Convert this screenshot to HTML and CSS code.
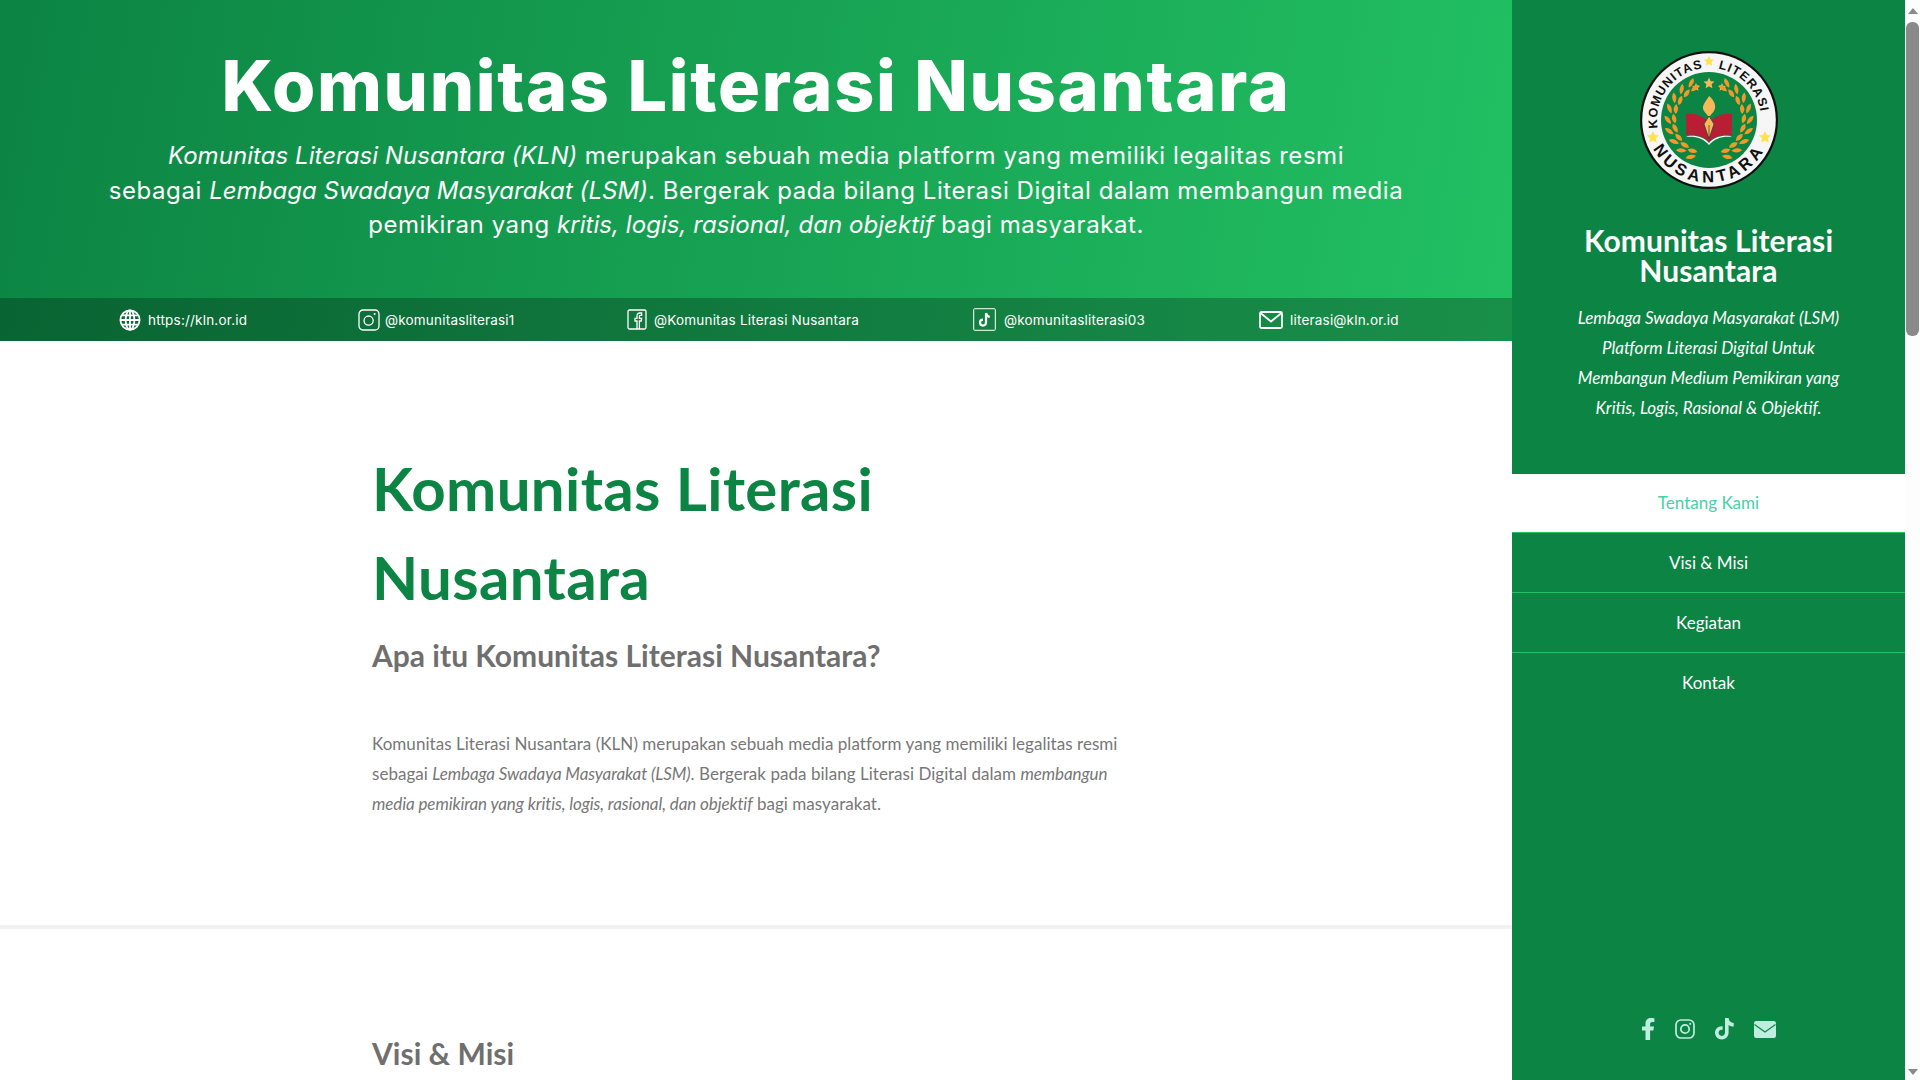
FILE: index.html
```html
<!DOCTYPE html>
<html lang="en">
<head>
    <meta charset="UTF-8">
    <meta name="viewport" content="width=device-width, initial-scale=1.0">
    <title>Komunitas Literasi Nusantara</title>
    <link rel="stylesheet" href="styles.css">
</head>
<body>
    <div class="page">
        <div class="main">
            <header class="hero">
                <div class="hero-text">
                    <h1 class="hero-title">Komunitas Literasi Nusantara</h1>
                    <p class="hero-lead"><em>Komunitas Literasi Nusantara (KLN)</em> merupakan sebuah media platform yang memiliki legalitas resmi<br>sebagai <em>Lembaga Swadaya Masyarakat (LSM)</em>. Bergerak pada bilang Literasi Digital dalam membangun media<br>pemikiran yang <em>kritis, logis, rasional, dan objektif</em> bagi masyarakat.</p>
                </div>
                <div class="hero-links">
                    <span class="hero-link">
                        <svg class="link-icon" width="22" height="22" viewBox="0 0 22 22" fill="none" stroke="#fff" stroke-width="1.8"><circle cx="11" cy="11" r="9.6"/><ellipse cx="11" cy="11" rx="4.4" ry="9.6"/><path d="M11 1.4v19.2M1.4 11h19.2M2.8 6.4h16.4M2.8 15.6h16.4"/></svg>
                        https://kln.or.id
                    </span>
                    <span class="hero-link link-ig">
                        <svg class="link-icon" width="22" height="22" viewBox="0 0 22 22" fill="none" stroke="#fff" stroke-width="1.3"><rect x="1" y="1" width="20" height="20" rx="4"/><circle cx="10.6" cy="11.6" r="4.6"/><circle cx="16.6" cy="5" r="1" fill="#fff" stroke="none"/></svg>
                        @komunitasliterasi1
                    </span>
                    <span class="hero-link">
                        <svg class="link-icon" width="20" height="21" viewBox="0 0 20 21" fill="none" stroke="#fff" stroke-width="1.3"><rect x="1" y="1" width="18" height="19" rx="1.5"/><path d="M10 20v-8H8v-2.6h2V7.2C10 5 11.2 4 13 4h1.6v2.4h-1.2c-.8 0-1 .4-1 1.1v1.9h2.2l-.4 2.6h-1.800v8"/></svg>
                        @Komunitas Literasi Nusantara
                    </span>
                    <span class="hero-link link-tt">
                        <svg class="link-icon" width="23" height="23" viewBox="0 0 23 23" fill="none" stroke="#fff"><rect x=".7" y=".7" width="21.6" height="21.6" rx="1" stroke-width="1"/><path d="M13 5v9.6a3 3 0 1 1-3-3M13 5c.3 2.2 1.6 3.6 3.8 3.9" stroke-width="2.2"/></svg>
                        @komunitasliterasi03
                    </span>
                    <span class="hero-link">
                        <svg class="link-icon" width="24" height="18" viewBox="0 0 24 18" fill="none" stroke="#fff" stroke-width="1.8"><rect x="1" y="1" width="22" height="16" rx="1.5"/><path d="M1.5 2l10.5 8.5L22.500 2"/></svg>
                        literasi@kln.or.id
                    </span>
                </div>
            </header>

            <section class="about">
                <div class="about-inner">
                    <h1 class="about-title">Komunitas Literasi Nusantara</h1>
                    <h2 class="about-sub">Apa itu Komunitas Literasi Nusantara?</h2>
                    <p class="about-text">Komunitas Literasi Nusantara (KLN) merupakan sebuah media platform yang memiliki legalitas resmi sebagai <em>Lembaga Swadaya Masyarakat (LSM)</em>. Bergerak pada bilang Literasi Digital dalam <em>membangun media pemikiran yang kritis, logis, rasional, dan objektif</em> bagi masyarakat.</p>
                </div>
            </section>

            <section class="visi">
                <h2 class="about-sub">Visi &amp; Misi</h2>
            </section>
        </div>

        <aside class="sidebar">
            <div class="brand">
                <svg class="logo" width="140" height="140" viewBox="0 0 140 140">
                    <defs>
                        <path id="arcTop" d="M70 122A52 52 0 1 1 70.100 122"/>
                        <path id="arcBottom" d="M9.500 87A63 63 0 0 0 130.500 87"/>
                        <path id="star" d="M0-5l1.500 3.300 3.500.4-2.600 2.400.7 3.600L0 2.900-3.100 4.700l.7-3.600L-5-1.300l3.500-.4z"/>
                        <g id="leaves" fill="#f19a29">
                            <path d="M0-38q2-6 9-6-1 6-9 6z"/>
                            <path d="M0-38q5-5 10-1-5 5-10 1z" transform="translate(0 4)"/>
                        </g>
                        <g id="laurel">
                            <use href="#leaves" transform="rotate(-32)"/>
                            <use href="#leaves" transform="rotate(-48)"/>
                            <use href="#leaves" transform="rotate(-64)"/>
                            <use href="#leaves" transform="rotate(-80)"/>
                            <use href="#leaves" transform="rotate(-96)"/>
                            <use href="#leaves" transform="rotate(-112)"/>
                            <use href="#leaves" transform="rotate(-128)"/>
                            <use href="#leaves" transform="rotate(-144)"/>
                            <use href="#leaves" transform="rotate(-160)"/>
                        </g>
                    </defs>
                    <circle cx="70" cy="70" r="69" fill="#111"/>
                    <circle cx="70" cy="70" r="66.800" fill="#f6f6f6"/>
                    <circle cx="70" cy="70" r="48" fill="#0c8443"/>
                    <text class="logo-top"><textPath href="#arcTop" startOffset="157" text-anchor="end">KOMUNITAS</textPath></text>
                    <text class="logo-top"><textPath href="#arcTop" startOffset="172" text-anchor="start">LITERASI</textPath></text>
                    <text class="logo-bottom"><textPath href="#arcBottom" startOffset="50%" text-anchor="middle">NUSANTARA</textPath></text>
                    <use href="#star" transform="translate(70 11)" fill="#ffe14d"/>
                    <use href="#star" transform="translate(14 87) scale(1.200)" fill="#ffe14d"/>
                    <use href="#star" transform="translate(126 87) scale(1.200)" fill="#ffe14d"/>
                    <use href="#star" transform="translate(70 33) scale(1.100)" fill="#f5b95a"/>
                    <use href="#star" transform="translate(57 37) scale(.8)" fill="#f5b95a"/>
                    <use href="#star" transform="translate(83 37) scale(.8)" fill="#f5b95a"/>
                    <use href="#laurel" transform="translate(70 70)"/>
                    <use href="#laurel" transform="translate(70 70) scale(-1 1)"/>
                    <path d="M47 64c9-1 17 2 23 8v20c-6-6-14-8-23-7zM93 64c-9-1-17 2-23 8v20c6-6 14-8 23-7z" fill="#b81f35"/>
                    <path d="M49 86c8-1 16 1 21 7 5-6 13-8 21-7l2 1c-9-1-17 1-23 8-6-7-14-9-23-8z" fill="#fff"/>
                    <path d="M70 46c5 4 8 10 5 15-1 2-3 3-4 5h-2c-1-2-3-3-4-5-3-5 1-8 5-15z" fill="#f5b95a"/>
                    <path d="M70 66l5 8-5 15-5-15z" fill="#f5b95a" stroke="#333" stroke-width=".7"/>
                    <path d="M70 75v13" stroke="#333" stroke-width=".7"/>
                </svg>
                <h2 class="brand-title">Komunitas Literasi Nusantara</h2>
                <p class="brand-text">Lembaga Swadaya Masyarakat (LSM) Platform Literasi Digital Untuk Membangun Medium Pemikiran yang Kritis, Logis, Rasional &amp; Objektif.</p>
            </div>
            <nav class="side-nav">
                <a class="nav-item nav-active">Tentang Kami</a>
                <a class="nav-item">Visi &amp; Misi</a>
                <a class="nav-item">Kegiatan</a>
                <a class="nav-item">Kontak</a>
            </nav>
            <div class="side-social">
                <svg width="13" height="22" viewBox="0 0 13 22" fill="#bdeee0"><path d="M3.500 22V12.500H0V8.500h3.500V5.600C3.500 2 5.700 0 9 0c1.500 0 2.900.2 3.400.3v3.600h-2.100c-1.700 0-2.200 1-2.200 2.100v2.500h3.900l-.6 4h-3.300V22z"/></svg>
                <svg width="20" height="20" viewBox="0 0 20 20" fill="none" stroke="#bdeee0" stroke-width="1.700"><rect x="1" y="1" width="18" height="18" rx="5"/><circle cx="10" cy="10" r="4.200"/><circle cx="15.200" cy="4.800" r="1.100" fill="#bdeee0" stroke="none"/></svg>
                <svg width="19" height="22" viewBox="0 0 19 22" fill="#bdeee0"><path d="M10 0h3.600c.2 2.900 2 4.800 5.100 5.100v3.400c-1.900 0-3.600-.6-5.100-1.600v7.600c0 4-3 7-6.800 7S0 18.500 0 14.800c0-4 3.400-7 7.600-6.500v3.600c-2-.5-4 .8-4 2.900 0 1.800 1.400 3.100 3.100 3.100 1.900 0 3.300-1.400 3.300-3.400z"/></svg>
                <svg width="22" height="17" viewBox="0 0 22 17"><rect width="22" height="17" rx="2.200" fill="#bdeee0"/><path d="M.5 3.500L11 11 21.500 3.500" fill="none" stroke="#0c8443" stroke-width="1.100"/></svg>
            </div>
        </aside>

        <div class="scrollbar">
            <span class="scroll-up"></span>
            <div class="scroll-track"><div class="scroll-thumb"></div></div>
            <span class="scroll-down"></span>
        </div>
    </div>
</body>
</html>
```

FILE: styles.css
```css
* {
    box-sizing: border-box;
}
html, body {
    margin: 0;
    padding: 0;
    height: 100%;
    overflow: hidden;
}
body {
    font-family: Lato, "Liberation Sans", sans-serif;
    color: #777;
    background-color: #fff;
}
.page {
    display: flex;
    height: 1080px;
}
.main {
    flex: 1;
    min-width: 0;
    overflow: hidden;
}

/* hero */
.hero {
    height: 341px;
    display: flex;
    flex-direction: column;
    background: linear-gradient(100deg, #0c8443 0%, #22c063 100%);
    color: #fff;
}
.hero-text {
    height: 298px;
    padding-top: 45px;
    text-align: center;
}
.hero-title {
    margin: 0;
    font-family: Inter, "Noto Sans", sans-serif;
    font-size: 70px;
    font-weight: 800;
    line-height: 82px;
    letter-spacing: 1.650px;
}
.hero-lead {
    margin: 12px 0 0;
    font-family: Inter, "Noto Sans", sans-serif;
    font-size: 24px;
    line-height: 34.500px;
    letter-spacing: .56px;
}
.hero-lead em {
    letter-spacing: .05px;
}
.hero-links {
    height: 43px;
    display: grid;
    grid-template-columns: 239px 269px 346px 286px auto;
    align-items: center;
    background-color: rgba(0, 0, 0, 0.25);
    font-family: Inter, "Noto Sans", sans-serif;
    font-size: 13.500px;
    letter-spacing: .2px;
    padding-left: 119px;
}
.hero-link {
    display: flex;
    align-items: center;
    gap: 7px;
    white-space: nowrap;
}
.link-ig {
    gap: 5px;
}
.link-tt {
    gap: 8px;
}

/* content */
.about {
    height: 588px;
    padding: 103px 0 0 372px;
    border-bottom: 4px solid #f1f1f1;
}
.about-inner {
    width: 750px;
}
.about-title {
    margin: 0;
    font-size: 60px;
    font-weight: 700;
    line-height: 89px;
    color: #0c8443;
    width: 560px;
    letter-spacing: .35px;
}
.about-sub {
    margin: 0;
    font-size: 30px;
    font-weight: 700;
    line-height: 40px;
    color: #6f6f6f;
}
.about-title + .about-sub {
    margin-top: 13px;
}
.about-text {
    margin: 54px 0 0;
    font-size: 17px;
    line-height: 30px;
    letter-spacing: .04px;
}
.about-text em {
    letter-spacing: -.1px;
}
.visi {
    padding: 104px 0 0 372px;
}

/* sidebar */
.sidebar {
    width: 393px;
    flex-shrink: 0;
    display: flex;
    flex-direction: column;
    background-color: #0c8443;
    color: #fff;
}
.brand {
    height: 474px;
    padding-top: 50px;
    text-align: center;
}
.logo {
    display: block;
    margin: 0 auto;
}
.logo-top, .logo-bottom {
    font-family: "Liberation Sans", sans-serif;
    font-weight: 700;
    fill: #111;
}
.logo-top {
    font-size: 12.500px;
    letter-spacing: 1px;
}
.logo-bottom {
    font-size: 16.500px;
    letter-spacing: 3.800px;
}
.brand-title {
    margin: 35px auto 0;
    width: 300px;
    font-size: 30px;
    font-weight: 700;
    line-height: 30px;
    letter-spacing: .1px;
}
.brand-text {
    margin: 18px auto 0;
    width: 280px;
    font-size: 17px;
    font-style: italic;
    line-height: 30px;
}
.side-nav {
    display: flex;
    flex-direction: column;
}
.nav-item {
    height: 60px;
    display: flex;
    align-items: center;
    justify-content: center;
    padding-bottom: 1px;
    font-size: 17px;
    color: #fff;
    border-bottom: 1px solid #22c063;
}
.nav-item:last-child {
    border-bottom: none;
}
.nav-active {
    height: 59px;
    padding-bottom: 2px;
    background-color: #fff;
    color: #48d0a8;
}
.side-social {
    margin-top: auto;
    height: 102px;
    display: flex;
    justify-content: center;
    align-items: center;
    gap: 20px;
}

/* fake browser scrollbar */
.scrollbar {
    width: 15px;
    flex-shrink: 0;
    display: flex;
    flex-direction: column;
    align-items: center;
    background-color: #fdfdfd;
}
.scroll-up, .scroll-down {
    width: 0;
    height: 0;
    margin: 8px 0 6px;
    border-left: 5px solid transparent;
    border-right: 5px solid transparent;
}
.scroll-up {
    border-bottom: 6px solid #8a8a8a;
}
.scroll-down {
    margin: 6px 0 5px;
    border-top: 6px solid #8a8a8a;
}
.scroll-track {
    flex: 1;
    width: 100%;
    padding: 0 1px;
}
.scroll-thumb {
    height: 314px;
    margin-top: 2px;
    background-color: #8a8a8a;
    border-radius: 6px;
}
```
